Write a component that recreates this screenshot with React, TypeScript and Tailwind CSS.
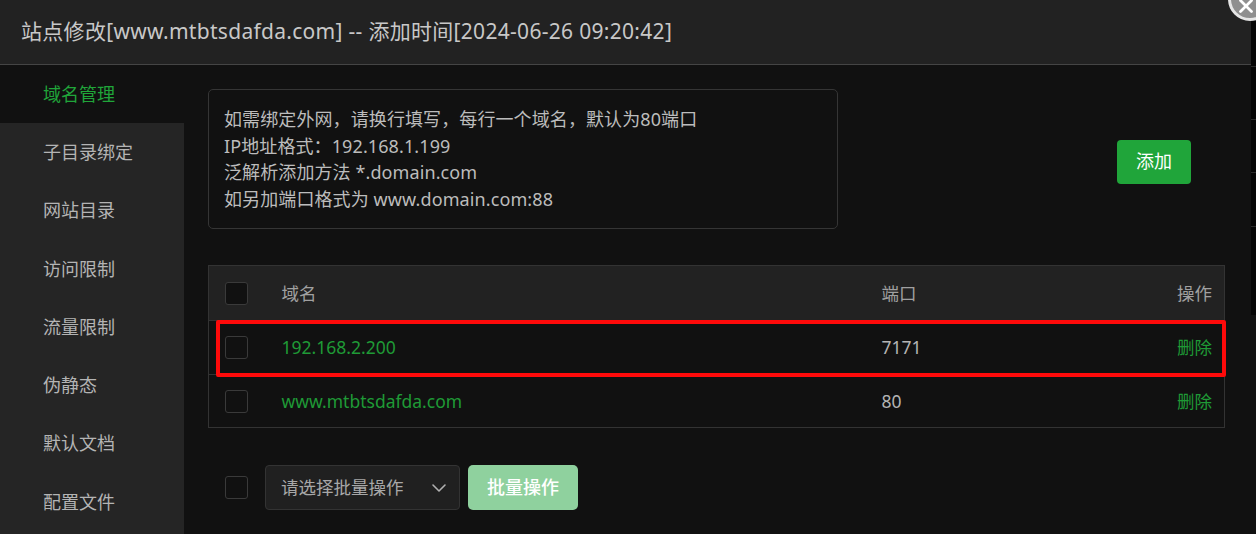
import React from "react";
import { ChevronDown, X } from "lucide-react";

const menuItems = [
  "域名管理",
  "子目录绑定",
  "网站目录",
  "访问限制",
  "流量限制",
  "伪静态",
  "默认文档",
  "配置文件",
];

const domains = [
  { name: "192.168.2.200", port: "7171" },
  { name: "www.mtbtsdafda.com", port: "80" },
];

function Checkbox({ dark }: { dark?: boolean }) {
  return (
    <span
      className={`block w-[23px] h-[23px] rounded-[3px] border border-[#3a3a3a] ${
        dark ? "bg-[#111111]" : "bg-transparent"
      }`}
    ></span>
  );
}

function App() {
  return (
    <div
      className="relative flex flex-row w-[1256px] h-[534px] overflow-hidden bg-[#111111]"
      style={{ fontFamily: '"Noto Sans", "Noto Sans CJK SC", sans-serif' }}
    >
      <div className="flex flex-col w-[1251px] h-full">
        {/* header */}
        <div className="flex flex-row items-center h-[65px] shrink-0 bg-[#222222] border-b border-[#454545] pl-[21px]">
          <span className="text-[21px] text-[#c8c8c8] tracking-[0.3px]">
            站点修改[www.mtbtsdafda.com] -- 添加时间[2024-06-26 09:20:42]
          </span>
        </div>

        <div className="flex flex-row flex-1">
          {/* sidebar */}
          <div className="flex flex-col w-[184px] shrink-0 bg-[#252525]">
            {menuItems.map((item, index) => (
              <div
                key={index}
                className={`flex items-center h-[58.3px] pl-[43px] text-[18px] ${
                  index === 0
                    ? "bg-[#111111] text-[#20a53a]"
                    : "text-[#b4b4b4]"
                }`}
              >
                {item}
              </div>
            ))}
          </div>

          {/* content */}
          <div className="flex flex-col pl-[24px] pt-[24px]">
            <div className="flex flex-row items-center">
              <div className="w-[630px] h-[140px] rounded-[5px] border border-[#353535] px-[15px] pt-[16px] text-[18px] leading-[26.7px] text-[#bcbcbc] tracking-[0.1px]">
                <div>如需绑定外网，请换行填写，每行一个域名，默认为80端口</div>
                <div>IP地址格式：192.168.1.199</div>
                <div>泛解析添加方法 *.domain.com</div>
                <div>如另加端口格式为 www.domain.com:88</div>
              </div>
              <button className="ml-[279px] mt-[5px] w-[74px] h-[44px] rounded-[4px] bg-[#20a53a] text-white text-[18px]">
                添加
              </button>
            </div>

            <div className="relative mt-[36px] w-[1017px]">
              <table className="w-full border-collapse border border-[#333333] text-[17.5px]">
                <thead>
                  <tr className="h-[55px] bg-[#222222]">
                    <th className="w-[73px] pl-[16px] text-left font-normal">
                      <Checkbox dark />
                    </th>
                    <th className="w-[600px] text-left font-normal text-[#a0a0a0]">
                      域名
                    </th>
                    <th className="text-left font-normal text-[#a0a0a0]">
                      端口
                    </th>
                    <th className="pr-[12px] text-right font-normal text-[#a0a0a0]">
                      操作
                    </th>
                  </tr>
                </thead>
                <tbody>
                  {domains.map((domain, index) => (
                    <tr
                      key={index}
                      className={`${
                        index === 0 ? "h-[54px]" : "h-[53px]"
                      } border-t border-[#333333]`}
                    >
                      <td className="pl-[16px]">
                        <Checkbox />
                      </td>
                      <td className="text-[#1f9a36]">{domain.name}</td>
                      <td className="text-[#b4b4b4]">{domain.port}</td>
                      <td className="pr-[12px] text-right text-[#1f9a36]">
                        删除
                      </td>
                    </tr>
                  ))}
                </tbody>
              </table>
              {/* red annotation */}
              <div className="absolute left-[8px] top-[55px] w-[1010px] h-[57px] border-[4px] border-[#ff0a0a] rounded-[2px]"></div>
            </div>

            <div className="flex flex-row items-center mt-[37px]">
              <div className="pl-[17px]">
                <Checkbox />
              </div>
              <div className="ml-[17px] flex flex-row items-center justify-between w-[195px] h-[45px] rounded-[4px] border border-[#333333] bg-[#202020] pl-[15px] pr-[8px] text-[17.5px] text-[#a8a8a8]">
                请选择批量操作
                <ChevronDown size={24} strokeWidth={1.6} color="#b0b0b0" />
              </div>
              <button className="ml-[8px] w-[110px] h-[45px] rounded-[5px] bg-[#8fd19e] text-white text-[18px] font-medium">
                批量操作
              </button>
            </div>
          </div>
        </div>
      </div>

      {/* right strip */}
      <div className="flex flex-col w-[5px] h-[315px] bg-[#050505]">
        <div className="h-[67px] border-b border-[#2a2a2a]"></div>
        <div className="h-[53px] border-b border-[#2a2a2a]"></div>
        <div className="h-[53px] border-b border-[#2a2a2a]"></div>
        <div className="h-[54px] border-b border-[#2a2a2a]"></div>
      </div>

      {/* close button */}
      <div className="absolute left-[1228px] top-[-23px] flex items-end justify-center w-[44px] h-[44px] rounded-full bg-[#8f8f8f] border-[3px] border-[#e6e6e6] pb-[1px]">
        <X size={22} strokeWidth={3} color="#ffffff" className="-ml-[8px]" />
      </div>
    </div>
  );
}

export default App;
